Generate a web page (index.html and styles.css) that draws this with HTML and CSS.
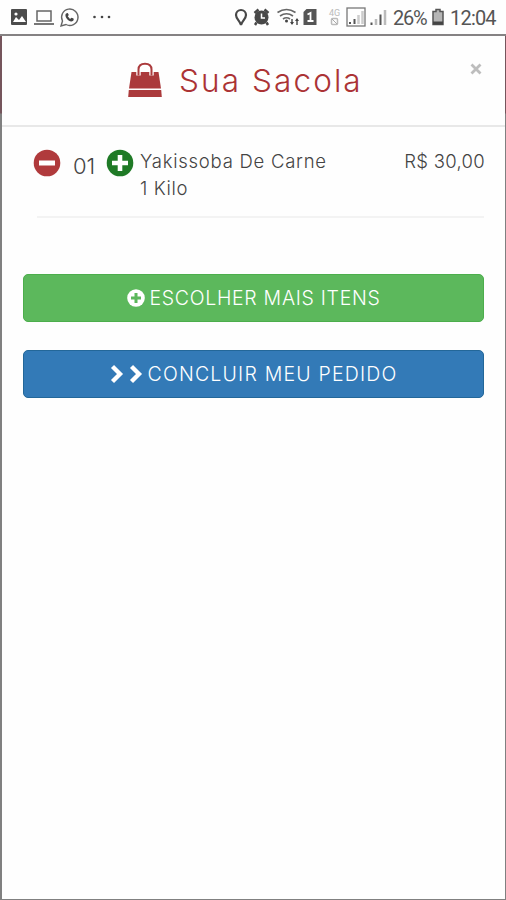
FILE: index.html
```
<!DOCTYPE html>
<html lang="pt-br">
<head>
	<meta charset="utf-8">
	<title>Sua Sacola</title>
	<link rel="stylesheet" href="styles.css">
</head>
<body>
	<div class="status">
		<svg class="status-esq" width="120" height="34" viewBox="0 0 120 34">
			<rect x="11" y="9" width="16" height="16" rx="1" fill="#4c4c4c"/>
			<path d="M13 22l3-5 3 3 3-4 4 6z" fill="#fff"/>
			<circle cx="16" cy="14" r="1.6" fill="#fff"/>
			<path d="M37 11h14v10h-14z" fill="none" stroke="#666" stroke-width="1.5"/>
			<path d="M34 24h20" stroke="#777" stroke-width="2"/>
			<path d="M61 26l1.500-5a8.200 8.200 0 1 1 3.500 3.500z" fill="none" stroke="#666" stroke-width="1.400"/>
			<path d="M66 13.500c-2 2 1.500 8 5.500 8 2 0 3-2.500 1.500-3.200l-1.500-.6-1.500 1.200-2.200-2.600 1-1.300-1-2z" fill="#444"/>
			<g fill="#444"><circle cx="94.500" cy="17" r="1.300"/><circle cx="102" cy="17" r="1.300"/><circle cx="109" cy="17" r="1.300"/></g>
		</svg>
		<div class="status-dir">
			<svg width="156" height="34" viewBox="234 0 156 34">
				<path d="M241 25c-1-4-5-6-5-10a5 5 0 0 1 10 0c0 4-4 6-5 10z" fill="none" stroke="#484848" stroke-width="2.200"/>
				<circle cx="261.500" cy="17.500" r="7" fill="#484848"/>
				<path d="M254.500 13l4-3.500M268.500 13l-4-3.500M256.500 22.500l-1.500 2.500M266.500 22.500l1.500 2.500" stroke="#484848" stroke-width="2.500"/>
				<path d="M261.500 13.500v4.500h3.500" fill="none" stroke="#fff" stroke-width="1.500"/>
				<path d="M277.500 12.500q9-6 18 0M280 16q6.500-4.500 13 0M283 19q3.500-2.500 7 0" fill="none" stroke="#666" stroke-width="1.600"/>
				<circle cx="286.500" cy="21" r="1.500" fill="#444"/>
				<path d="M292 19v5M297 25v-6" stroke="#444" stroke-width="1.400"/>
				<path d="M290 22h4l-2 3zM295 21h4l-2-3z" fill="#444"/>
				<path d="M303.500 12l3-3h10v16h-13z" fill="#555"/>
				<path d="M307.500 14.500l3-1.500v8M307.500 21h6" fill="none" stroke="#fff" stroke-width="1.800"/>
				<text class="rede" x="329" y="16">4G</text>
				<rect x="331.500" y="18.500" width="6" height="6" rx="1" fill="none" stroke="#bbb" stroke-width="1.500"/>
				<path d="M332 19l5 5" stroke="#aaa"/>
				<rect x="347" y="8" width="18" height="18" fill="none" stroke="#777" stroke-width="1.300"/>
				<path d="M350 22v2M354.500 19v5" stroke="#555" stroke-width="2"/>
				<path d="M358.500 15v9M362.500 11v13" stroke="#ccc" stroke-width="2.500"/>
				<path d="M371.500 22.500v2.500M380.500 14.500v10.500" stroke="#555" stroke-width="2"/>
				<path d="M376 19v6M385 10v15" stroke="#bbb" stroke-width="2.500"/>
			</svg>
			<span class="carga">26%</span>
			<svg class="bateria" width="12" height="34" viewBox="0 0 12 34">
				<path d="M4 9.500h4v2h3v13h-10v-13h3z" fill="#b5b5b5" stroke="#555" stroke-width="1.500"/>
				<path d="M1 21.500h10v3h-10z" fill="#444"/>
			</svg>
			<span class="hora">12:04</span>
		</div>
	</div>

	<div class="modal">
		<div class="cabecalho">
			<svg class="sacola" width="34" height="35" viewBox="0 0 34 35">
				<path d="M3.500 10h27l2.500 16.500h-32z" fill="#ab3a3c"/>
				<path d="M.8 28h32.400l.6 7h-33.600z" fill="#ab3a3c"/>
				<path d="M10.500 13.500v-6q0-5.500 6.500-5.500t6.500 5.500v6" fill="none" stroke="#fff" stroke-width="4.400"/>
				<path d="M10.500 13.500v-6q0-5.800 6.500-5.800t6.500 5.800v6" fill="none" stroke="#ab3a3c" stroke-width="2"/>
			</svg>
			<h1>Sua Sacola</h1>
			<svg class="fechar" width="12" height="12" viewBox="0 0 12 12"><path d="M1.500 1.500l9 9M10.500 1.500l-9 9" stroke="#bdbdbd" stroke-width="2.800"/></svg>
		</div>

		<div class="item">
			<svg class="btn-qtd" width="28" height="28" viewBox="0 0 28 28">
				<circle cx="14" cy="14" r="13.300" fill="#b03a3c"/>
				<path d="M6 14h16" stroke="#fff" stroke-width="5"/>
			</svg>
			<span class="qtd">01</span>
			<svg class="btn-qtd" width="28" height="28" viewBox="0 0 28 28">
				<circle cx="14" cy="14" r="13.300" fill="#1f7a26"/>
				<path d="M6 14h16M14 6v16" stroke="#fff" stroke-width="4.600"/>
			</svg>
			<div class="nome"><span class="produto">Yakissoba De Carne</span><br><span class="peso">1 Kilo</span></div>
			<span class="preco">R$ 30,00</span>
		</div>

		<button class="btn verde">
			<svg width="18" height="18" viewBox="0 0 18 18">
				<circle cx="9" cy="9" r="8.800" fill="#fff"/>
				<path d="M4 9h10M9 4v10" stroke="#5cb85c" stroke-width="3"/>
			</svg>
			<span class="mais">ESCOLHER MAIS ITENS</span>
		</button>
		<button class="btn azul">
			<svg width="33" height="20" viewBox="0 0 33 20">
				<path d="M2.500 2.500l7.500 7.500-7.500 7.500M21.500 2.500l7.500 7.500-7.500 7.500" fill="none" stroke="#fff" stroke-width="4.300"/>
			</svg>
			<span class="concluir">CONCLUIR MEU PEDIDO</span>
		</button>
	</div>
</body>
</html>
```
FILE: styles.css
```
*{
	box-sizing: border-box;
}
body{
	margin: 0;
	height: 900px;
	display: flex;
	flex-direction: column;
	overflow: hidden;
	background-color: #fefefe;
	font-family: Inter, "Open Sans", sans-serif;
	color: #444;
}
.status{
	display: flex;
	justify-content: space-between;
	height: 36px;
	flex: none;
	border-bottom: 2px solid #858283;
	font-family: Roboto, sans-serif;
	font-size: 20px;
	line-height: 36px;
	color: #555;
}
.status svg{
	display: block;
}
.status-dir{
	display: flex;
	padding-right: 10px;
}
.rede{
	font-size: 9px;
	fill: #bbb;
}
.carga{
	width: 35px;
	margin-left: 3px;
	letter-spacing: -1.3px;
	white-space: nowrap;
}
.bateria{
	margin: 0 6px 0 4px;
}
.hora{
	width: 46px;
	letter-spacing: -0.8px;
	white-space: nowrap;
}
.modal{
	flex: 1;
	border: 1px solid #808080;
	border-top-width: 0;
	border-left-width: 2px;
	/* fundo do site aparece na lateral ate a altura do topo */
	border-image: linear-gradient(#75555c 0, #75555c 77px, #808080 78px) 0 1 1 2;
	background-color: #fefefe;
}
.cabecalho{
	display: flex;
	height: 91px;
	padding: 26px 23px 0 126px;
	border-bottom: 2px solid #e8e8e8;
}
.cabecalho h1{
	margin: 0 auto 0 17px;
	font-size: 31.5px;
	font-weight: 300;
	line-height: 38px;
	letter-spacing: 2.1px;
	color: #ab3335;
	white-space: nowrap;
}
.fechar{
	margin-top: 1px;
}
.item{
	display: flex;
	height: 91px;
	margin: 0 21px 0 35px;
	padding-top: 22px;
	border-bottom: 2px solid #f3f3f3;
	font-size: 18.5px;
	font-weight: 300;
	line-height: 27px;
}
.btn-qtd{
	flex: none;
	margin-left: -4px;
}
.qtd{
	width: 38px;
	margin-left: 12px;
	margin-right: -1px;
	padding-top: 4px;
	font-size: 22px;
}
.nome{
	margin-top: -1px;
	margin-left: 6px;
}
.produto{
	letter-spacing: 0.75px;
}
.peso{
	letter-spacing: 0.6px;
}
.preco{
	margin-top: -1px;
	margin-right: -1px;
	letter-spacing: 0.3px;
	margin-left: auto;
}
.btn{
	display: flex;
	align-items: center;
	justify-content: center;
	width: 461px;
	height: 48px;
	margin: 56px 0 0 21px;
	padding: 0;
	border: 1px solid #4cae4c;
	border-radius: 5px;
	font-family: inherit;
	font-size: 19.5px;
	font-weight: 300;
	color: #fff;
	white-space: nowrap;
}
.btn svg{
	margin-right: 5px;
}
.mais{
	letter-spacing: 0.7px;
}
.concluir{
	letter-spacing: 1.2px;
}
.verde{
	background-color: #5cb85c;
}
.azul{
	margin-top: 28px;
	background-color: #337ab7;
	border-color: #236799;
}
```
